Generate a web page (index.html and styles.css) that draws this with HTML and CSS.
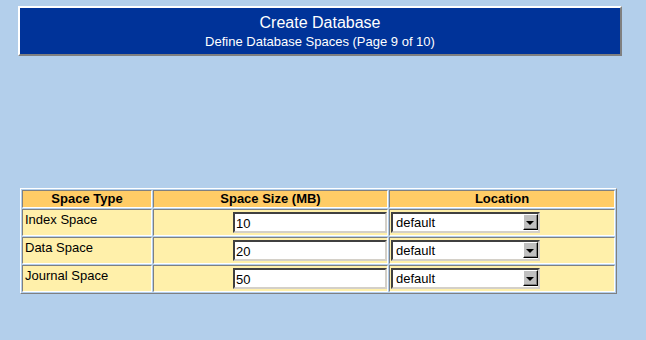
FILE: index.html
```html
<!DOCTYPE html>
<html>
<head>
   <meta charset="utf-8">
   <title>Create Database</title>
   <link rel="stylesheet" href="styles.css">
</head>
<body>
   <div class="banner">
      <div class="title">Create Database</div>
      <div class="subtitle">Define Database Spaces (Page 9 of 10)</div>
   </div>

   <table class="spaces">
      <tr>
         <th class="c-type">Space Type</th>
         <th class="c-size">Space Size (MB)</th>
         <th class="c-loc">Location</th>
      </tr>
      <tr>
         <td>Index Space</td>
         <td class="num"><input type="text" class="size" value="10"></td>
         <td class="where"><span class="dd"><select class="loc"><option>default</option></select></span></td>
      </tr>
      <tr>
         <td>Data Space</td>
         <td class="num"><input type="text" class="size" value="20"></td>
         <td class="where"><span class="dd"><select class="loc"><option>default</option></select></span></td>
      </tr>
      <tr>
         <td>Journal Space</td>
         <td class="num"><input type="text" class="size" value="50"></td>
         <td class="where"><span class="dd"><select class="loc"><option>default</option></select></span></td>
      </tr>
   </table>
</body>
</html>
```

FILE: styles.css
```css
body{
   margin: 0;
   background-color: #b3cfeb;
   font-family: "Liberation Sans", Arial, sans-serif;
   font-size: 13px;
   color: black;
}

.banner{
   margin: 6px 24px 0 18px;
   height: 46px;
   background-color: #003399;
   border: 2px solid;
   border-color: #ffffff #808080 #808080 #ffffff;
   color: white;
   text-align: center;
}
.banner .title{
   font-size: 16px;
   line-height: 18px;
   padding-top: 6px;
}
.banner .subtitle{
   font-size: 13px;
   line-height: 15px;
   padding-top: 2px;
}

table.spaces{
   margin: 132px 0 0 20px;
   width: 597px;
   border-collapse: separate;
   border-spacing: 1px;
   border: 1px solid;
   border-color: #ffffff #808080 #808080 #ffffff;
}
.spaces th, .spaces td{
   border: 1px solid;
   border-color: #808080 #ffffff #ffffff #808080;
   padding: 0 2px;
}
.spaces th{
   background-color: #ffcc66;
   font-weight: bold;
   height: 16px;
   line-height: 16px;
   padding: 0;
}
.spaces td{
   background-color: #fff0aa;
   height: 23px;
   vertical-align: top;
   padding-top: 2px;
   padding-bottom: 0;
   line-height: 16px;
}
.c-type{ width: 128px; }
.c-size{ width: 233px; }

.spaces td.num{
   text-align: right;
   padding: 2px 0 0 0;
}
input.size{
   box-sizing: border-box;
   width: 154px;
   height: 21px;
   margin: 0;
   padding: 1px 2px 0 1px;
   border: 2px solid;
   border-color: #404040 #d4d0c8 #d4d0c8 #404040;
   font-family: "Liberation Sans", Arial, sans-serif;
   font-size: 13px;
   background: white;
   color: black;
   vertical-align: top;
}

.spaces td.where{
   padding: 2px 0 0 1px;
}
.dd{
   position: relative;
   display: inline-block;
   vertical-align: top;
}
select.loc{
   -webkit-appearance: none;
   appearance: none;
   box-sizing: border-box;
   width: 149px;
   height: 21px;
   margin: 0;
   padding: 0 0 0 3px;
   border: 2px solid;
   border-color: #404040 #d4d0c8 #d4d0c8 #404040;
   border-radius: 0;
   background: white;
   font-family: "Liberation Sans", Arial, sans-serif;
   font-size: 13px;
   color: black;
   vertical-align: top;
}
.dd::after{
   content: "";
   position: absolute;
   right: 2px;
   top: 2px;
   width: 13px;
   height: 14px;
   background-color: #c0c0c0;
   border: 1px solid;
   border-color: #ffffff #000000 #000000 #ffffff;
   box-shadow: inset -1px -1px 0 #808080;
   pointer-events: none;
}
.dd::before{
   content: "";
   position: absolute;
   right: 6px;
   top: 9px;
   border-left: 4px solid transparent;
   border-right: 4px solid transparent;
   border-top: 4px solid black;
   z-index: 1;
   pointer-events: none;
}
```
